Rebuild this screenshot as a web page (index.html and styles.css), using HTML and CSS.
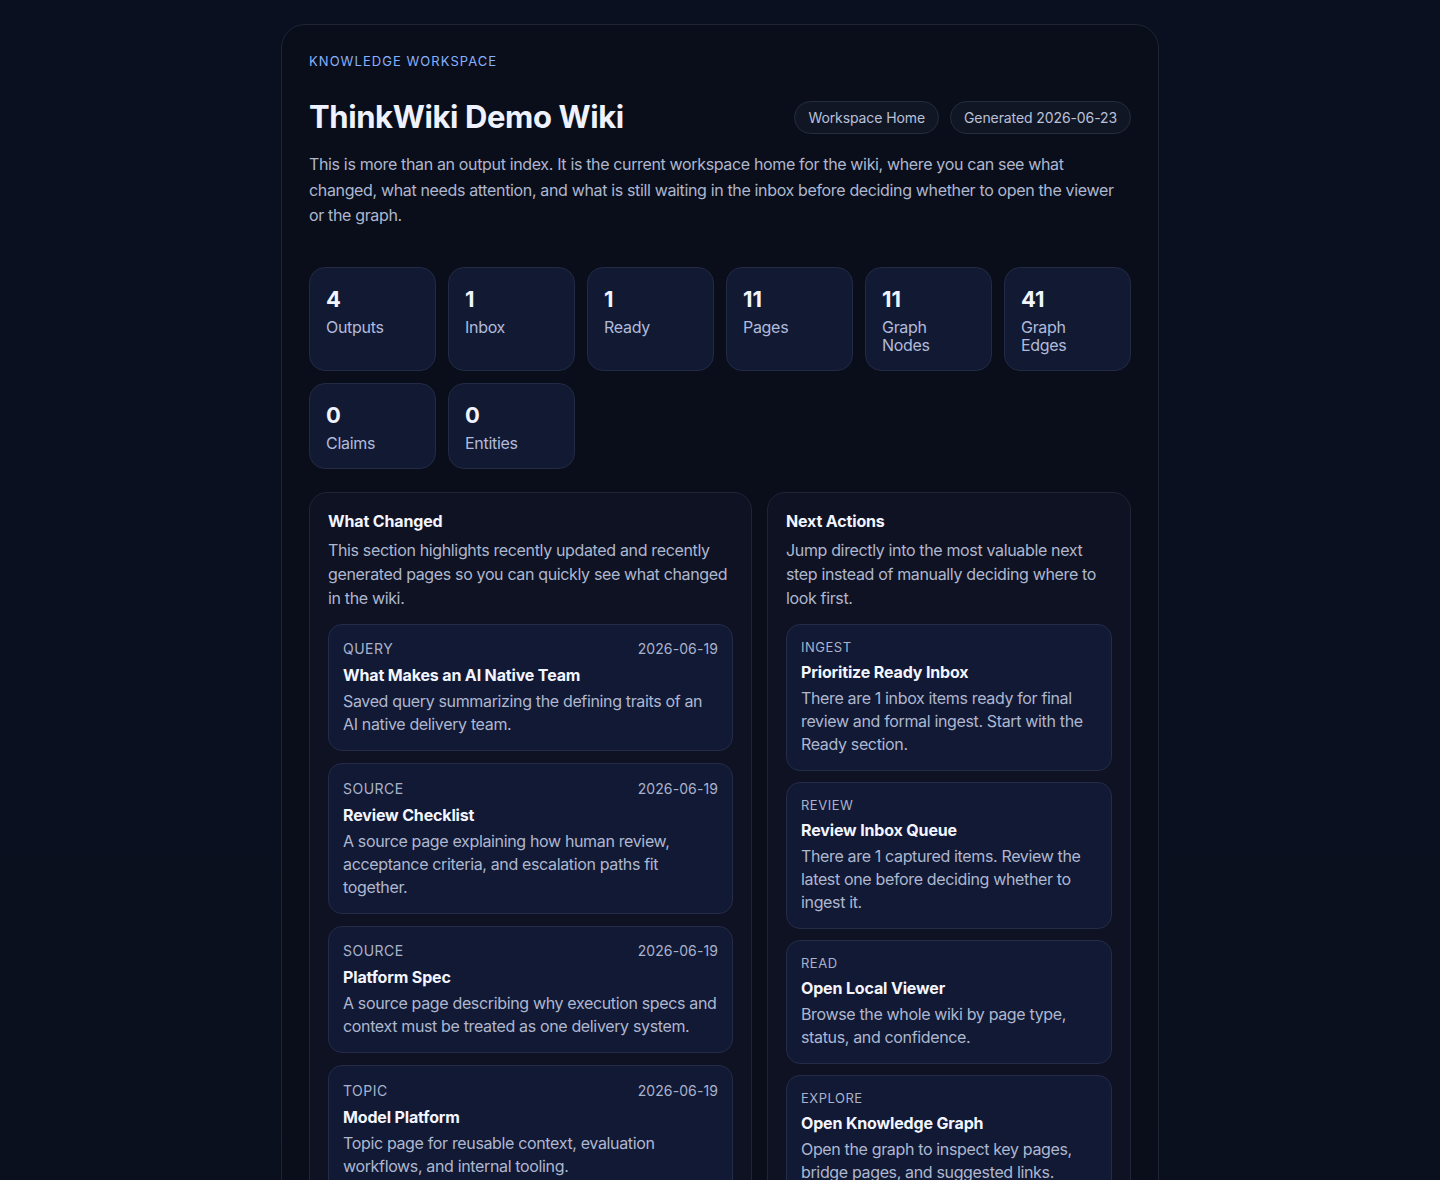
FILE: index.html
```html
<!DOCTYPE html>
<html lang="en">
<head>
    <meta charset="UTF-8">
    <meta name="viewport" content="width=device-width, initial-scale=1.0">
    <title>ThinkWiki Demo Wiki</title>
    <link rel="stylesheet" href="styles.css">
</head>
<body>
    <main class="shell">
        <p class="eyebrow">Knowledge Workspace</p>

        <div class="head">
            <h1>ThinkWiki Demo Wiki</h1>
            <div class="pills">
                <span class="pill">Workspace Home</span>
                <span class="pill">Generated 2026-06-23</span>
            </div>
        </div>

        <p class="lead">This is more than an output index. It is the current workspace home for the wiki, where you can see what changed, what needs attention, and what is still waiting in the inbox before deciding whether to open the viewer or the graph.</p>

        <div class="stats">
            <div class="stat"><b>4</b><span>Outputs</span></div>
            <div class="stat"><b>1</b><span>Inbox</span></div>
            <div class="stat"><b>1</b><span>Ready</span></div>
            <div class="stat"><b>11</b><span>Pages</span></div>
            <div class="stat"><b>11</b><span>Graph Nodes</span></div>
            <div class="stat"><b>41</b><span>Graph Edges</span></div>
            <div class="stat"><b>0</b><span>Claims</span></div>
            <div class="stat"><b>0</b><span>Entities</span></div>
        </div>

        <div class="panels">
            <section class="panel">
                <h2>What Changed</h2>
                <p class="panel-desc">This section highlights recently updated and recently generated pages so you can quickly see what changed in the wiki.</p>

                <div class="list">
                    <a class="item" href="#">
                        <div class="meta"><span>Query</span><span class="date">2026-06-19</span></div>
                        <strong>What Makes an AI Native Team</strong>
                        <p>Saved query summarizing the defining traits of an AI native delivery team.</p>
                    </a>
                    <a class="item" href="#">
                        <div class="meta"><span>Source</span><span class="date">2026-06-19</span></div>
                        <strong>Review Checklist</strong>
                        <p>A source page explaining how human review, acceptance criteria, and escalation paths fit together.</p>
                    </a>
                    <a class="item" href="#">
                        <div class="meta"><span>Source</span><span class="date">2026-06-19</span></div>
                        <strong>Platform Spec</strong>
                        <p>A source page describing why execution specs and context must be treated as one delivery system.</p>
                    </a>
                    <a class="item" href="#">
                        <div class="meta"><span>Topic</span><span class="date">2026-06-19</span></div>
                        <strong>Model Platform</strong>
                        <p>Topic page for reusable context, evaluation workflows, and internal tooling.</p>
                    </a>
                </div>
            </section>

            <section class="panel">
                <h2>Next Actions</h2>
                <p class="panel-desc">Jump directly into the most valuable next step instead of manually deciding where to look first.</p>

                <div class="list actions">
                    <a class="item" href="#">
                        <div class="meta"><span>Ingest</span></div>
                        <strong>Prioritize Ready Inbox</strong>
                        <p>There are 1 inbox items ready for final review and formal ingest. Start with the Ready section.</p>
                    </a>
                    <a class="item" href="#">
                        <div class="meta"><span>Review</span></div>
                        <strong>Review Inbox Queue</strong>
                        <p>There are 1 captured items. Review the latest one before deciding whether to ingest it.</p>
                    </a>
                    <a class="item" href="#">
                        <div class="meta"><span>Read</span></div>
                        <strong>Open Local Viewer</strong>
                        <p>Browse the whole wiki by page type, status, and confidence.</p>
                    </a>
                    <a class="item" href="#">
                        <div class="meta"><span>Explore</span></div>
                        <strong>Open Knowledge Graph</strong>
                        <p>Open the graph to inspect key pages, bridge pages, and suggested links.</p>
                    </a>
                </div>
            </section>
        </div>
    </main>
</body>
</html>
```

FILE: styles.css
```css
body {
    margin: 0;
    padding: 24px 0 40px;
    font-family: Inter, "Noto Sans", sans-serif;
    color: #e8ecf8;
    background: linear-gradient(180deg, #0b1020 0%, #0b1020 60%, #0a0f1c 100%);
    background-color: #0b1020;
    min-height: 100vh;
}

.shell {
    width: 822px;
    margin: 0 auto;
    padding: 27px 27px 40px;
    background-color: #0a0e1a;
    border: 1px solid #1e2434;
    border-radius: 24px;
}

.eyebrow {
    margin: 0;
    font-size: 13px;
    line-height: 18px;
    letter-spacing: 1.05px;
    text-transform: uppercase;
    color: #86b1ff;
}

.head {
    display: flex;
    justify-content: space-between;
    align-items: center;
    margin-top: 27px;
}

h1 {
    margin: 0;
    font-size: 31px;
    line-height: 40px;
    font-weight: 700;
    letter-spacing: -0.4px;
    color: #eef2ff;
}

.pills {
    display: flex;
    gap: 11px;
}

.pill {
    padding: 7px 13px;
    font-size: 14px;
    line-height: 17px;
    letter-spacing: -0.1px;
    color: #b9c1d9;
    background-color: #111625;
    border: 1px solid #262d3e;
    border-radius: 999px;
}

.lead {
    margin: 15px 0 0;
    font-size: 16px;
    line-height: 25.5px;
    letter-spacing: -0.35px;
    color: #aeb7cf;
}

.stats {
    display: grid;
    grid-template-columns: repeat(6, 1fr);
    gap: 12px;
    margin-top: 38px;
}

.stat {
    display: flex;
    flex-direction: column;
    padding: 16px;
    min-height: 50px;
    background-color: #121a33;
    border: 1px solid #222a44;
    border-radius: 16px;
}

.stat b {
    font-size: 22px;
    line-height: 30px;
    font-weight: 700;
    color: #f1f4ff;
}

.stat span {
    margin-top: 4px;
    font-size: 16px;
    line-height: 18px;
    letter-spacing: -0.3px;
    color: #b1badb;
    max-width: 70px;
}

.panels {
    display: grid;
    grid-template-columns: 443fr 364fr;
    gap: 15px;
    margin-top: 23px;
    align-items: start;
}

.panel {
    padding: 18px;
    background-color: #0e1222;
    border: 1px solid #1f2537;
    border-radius: 18px;
}

h2 {
    margin: 0;
    font-size: 16px;
    line-height: 20px;
    font-weight: 700;
    letter-spacing: -0.15px;
    color: #f3f5ff;
}

.panel-desc {
    margin: 7px 0 0;
    font-size: 16px;
    line-height: 24px;
    letter-spacing: -0.35px;
    color: #aeb7cf;
}

.list {
    display: flex;
    flex-direction: column;
    gap: 12px;
    margin-top: 14px;
}

.actions {
    gap: 11px;
}

.item {
    display: block;
    padding: 14.5px 14px 14px;
    text-decoration: none;
    background-color: #111935;
    border: 1px solid #242c48;
    border-radius: 14px;
}

.meta {
    display: flex;
    justify-content: space-between;
    font-size: 14px;
    line-height: 20px;
    letter-spacing: 0.5px;
    text-transform: uppercase;
    color: #aab3cb;
}

.meta .date {
    letter-spacing: 0.1px;
}

.item strong {
    display: block;
    margin-top: 5px;
    font-size: 16px;
    line-height: 22px;
    font-weight: 700;
    letter-spacing: -0.15px;
    color: #f3f5ff;
}

.item p {
    margin: 4px 0 0;
    font-size: 16px;
    line-height: 23px;
    letter-spacing: -0.35px;
    color: #aeb7cf;
}

.actions .item {
    padding: 13px 14px 14px;
}

.actions .meta {
    font-size: 13px;
    line-height: 18px;
}

.actions .item strong {
    margin-top: 5px;
}
```
